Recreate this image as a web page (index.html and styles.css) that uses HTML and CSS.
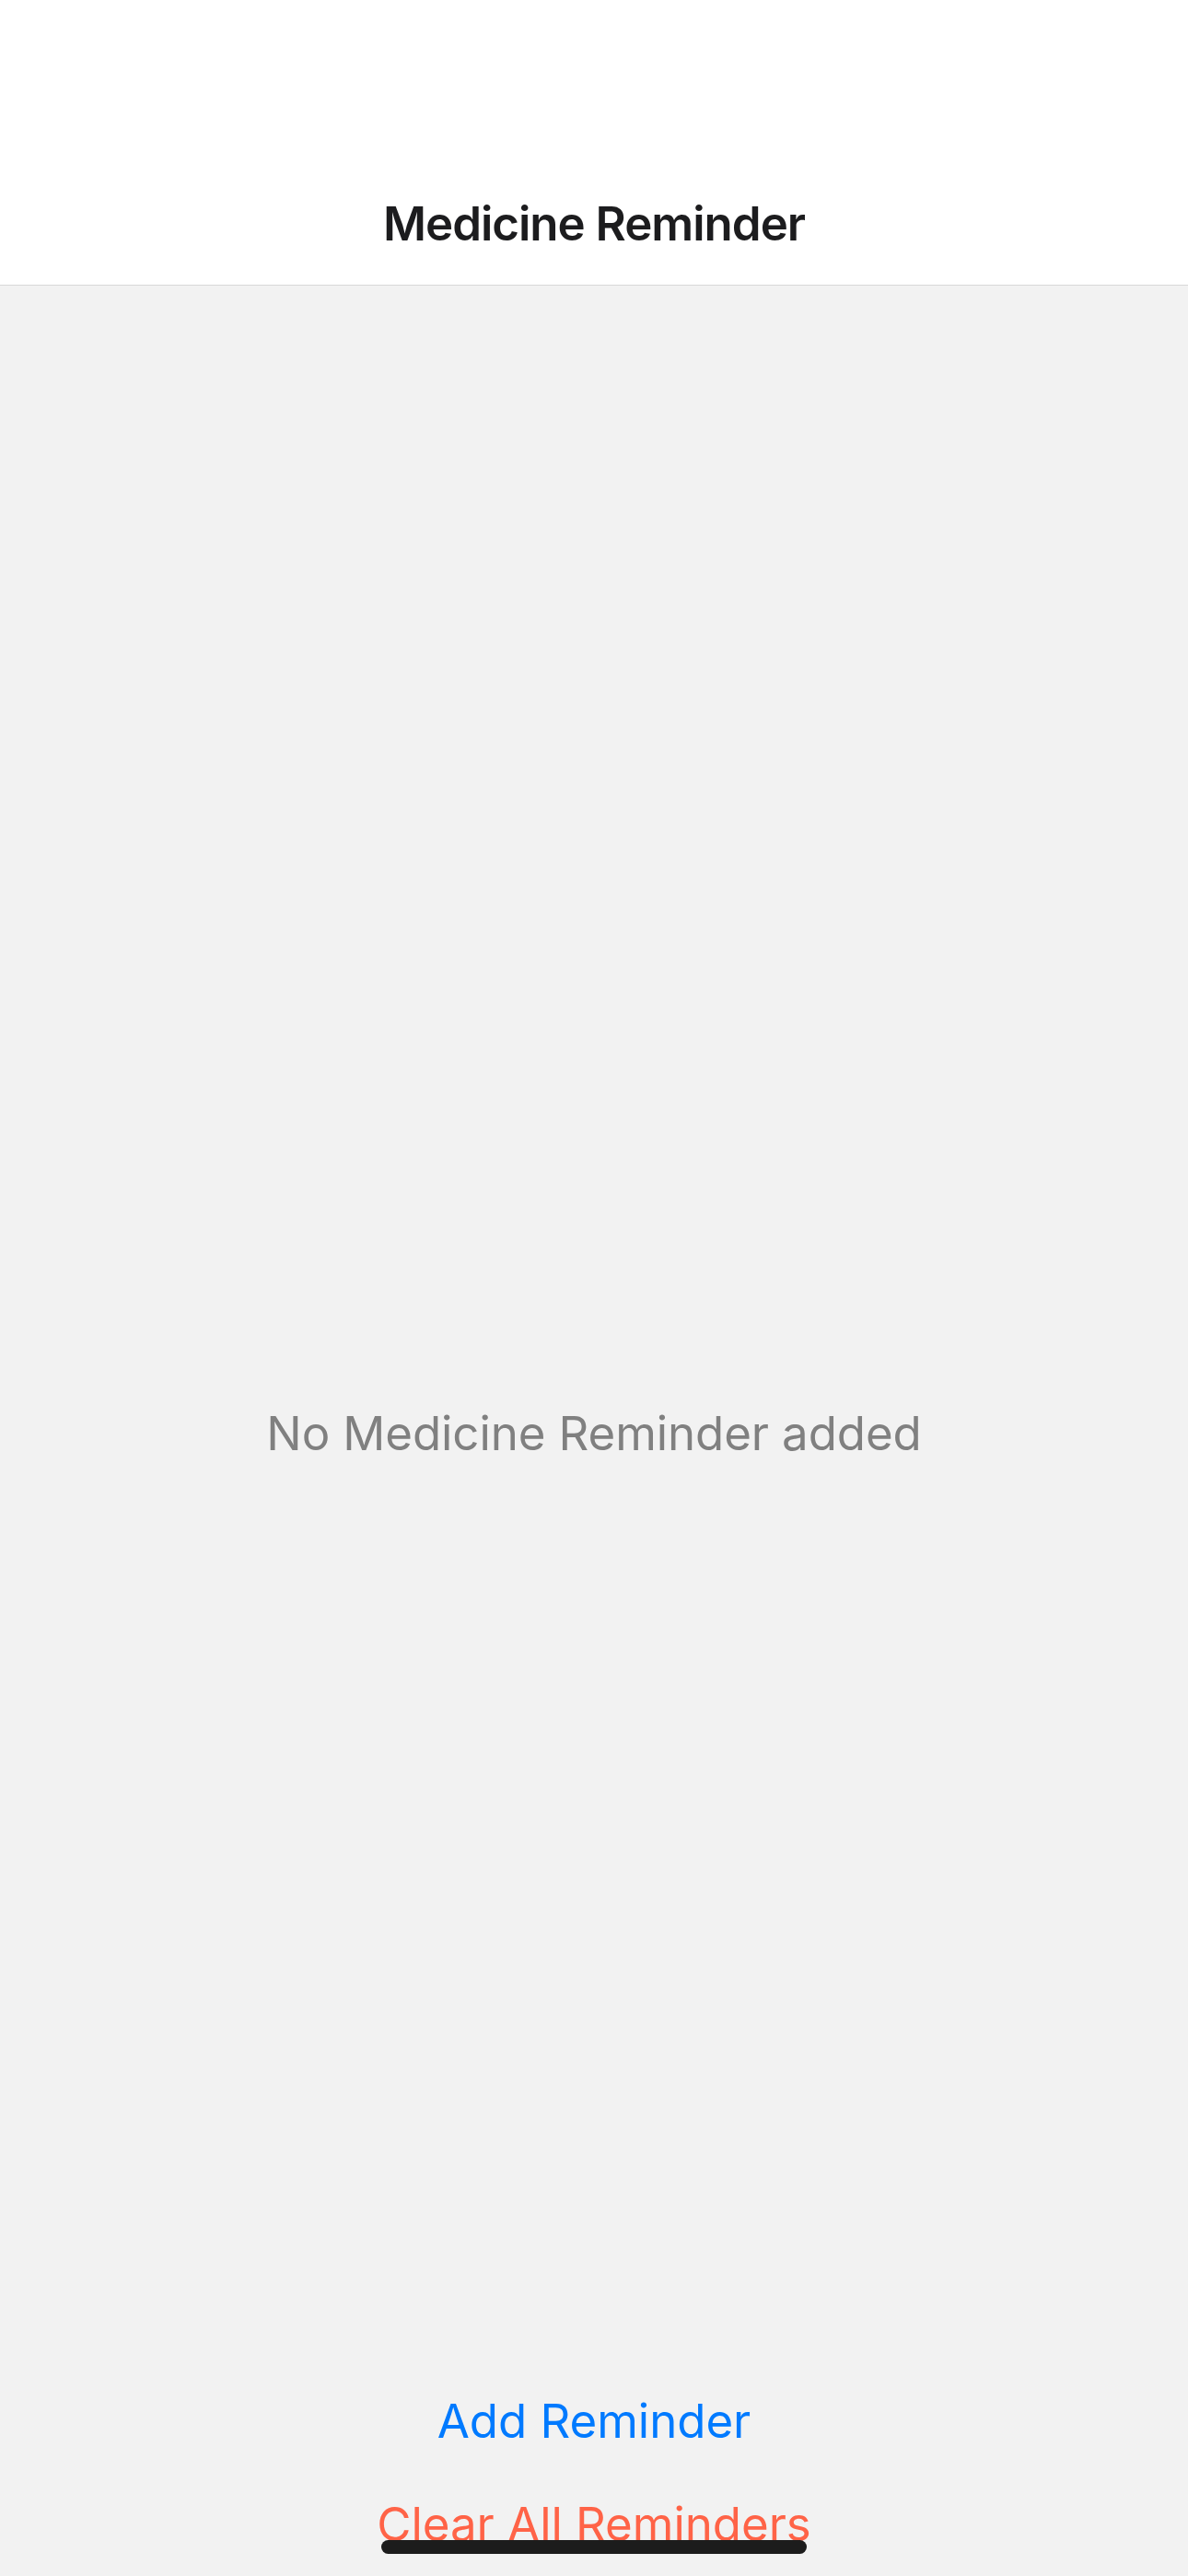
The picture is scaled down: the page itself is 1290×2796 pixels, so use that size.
FILE: index.html
```html
<!DOCTYPE html>
<html lang="en">
<head>
<meta charset="utf-8">
<title>Medicine Reminder</title>
<link rel="stylesheet" href="styles.css">
</head>
<body>
<div class="screen">
  <header class="nav">
    <h1 class="nav-title">Medicine Reminder</h1>
  </header>
  <main class="list">
    <p class="empty">No Medicine Reminder added</p>
  </main>
  <footer class="actions">
    <button class="action action-add" type="button">Add Reminder</button>
    <button class="action action-clear" type="button">Clear All Reminders</button>
  </footer>
  <div class="home-indicator"></div>
</div>
</body>
</html>
```

FILE: styles.css
```css
* { box-sizing: border-box; }
html, body { margin: 0; padding: 0; }
body {
  font-family: Inter, "Noto Sans", "Liberation Sans", sans-serif;
  background: #f2f2f2;
}
.screen {
  position: relative;
  width: 1290px;
  height: 2796px;
  display: flex;
  flex-direction: column;
  overflow: hidden;
  background: #f2f2f2;
}
.nav {
  background: #ffffff;
  padding: 212px 0 36px;
  border-bottom: 1px solid #d8d8d8;
  text-align: center;
}
.nav-title {
  margin: 0;
  font-size: 51px;
  line-height: 61px;
  font-weight: 600;
  color: #1c1c1e;
  letter-spacing: -1px;
}
.list {
  flex: 1;
  padding-top: 1215px;
  text-align: center;
}
.empty {
  margin: 0;
  font-size: 51px;
  line-height: 61px;
  color: #808080;
  letter-spacing: -0.1px;
}
.actions {
  display: flex;
  flex-direction: column;
  align-items: center;
  gap: 51px;
  padding-bottom: 26px;
}
.action {
  border: 0;
  background: none;
  padding: 0;
  font-family: inherit;
  font-size: 51px;
  line-height: 61px;
  letter-spacing: -0.05px;
}
.action-add { color: #007aff; }
.action-clear { color: #ff6347; }
.home-indicator {
  position: absolute;
  left: 414px;
  bottom: 24px;
  width: 462px;
  height: 15px;
  border-radius: 8px;
  background: #1c1c1c;
}
```
